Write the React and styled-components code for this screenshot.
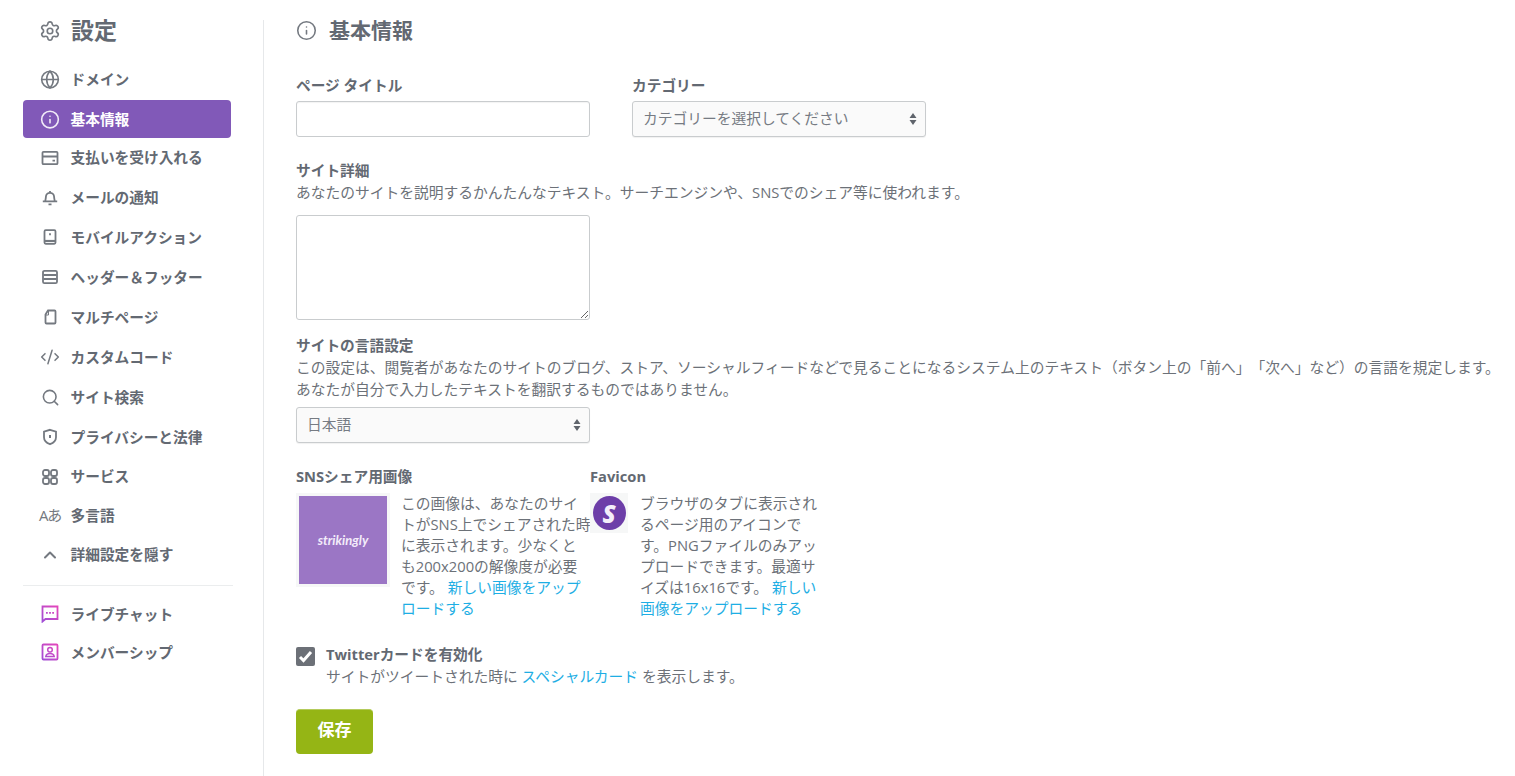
import React from "react"
import styled, { createGlobalStyle } from "styled-components"
import { Settings, Globe, Info, Search, ChevronUp, CodeXml } from "lucide-react"

const GlobalStyle = createGlobalStyle`
  html, body {
    margin: 0;
    padding: 0;
    background: #fff;
    overflow: hidden;
  }
  body {
    font-family: "Open Sans", "Noto Sans CJK JP", sans-serif;
    font-size: 14.75px;
    color: #636972;
    text-spacing-trim: space-all;
  }
  * { box-sizing: border-box; }
`

const Page = styled.div`
  display: flex;
  height: 776px;
  width: 1515px;
  padding-top: 20px;
`

const Sidebar = styled.aside`
  width: 264px;
  flex: none;
  padding: 0 32px 0 23px;
  border-right: 1px solid #e6e8ea;
`

const SideTitle = styled.h1`
  display: flex;
  align-items: center;
  gap: 10px;
  height: 21px;
  margin: 0 0 18px;
  padding-left: 16px;
  font-size: 23px;
  font-weight: 700;
  line-height: 21px;
  color: #636972;
`

const NavList = styled.nav`
  display: flex;
  flex-direction: column;
`

const NavItem = styled.a`
  display: flex;
  align-items: center;
  height: ${p => p.$h || 40}px;
  padding-left: 17px;
  border-radius: 4px;
  font-size: 14.7px;
  font-weight: 700;
  white-space: nowrap;
  background: ${p => (p.$active ? "#8159b8" : "transparent")};
  color: ${p => (p.$active ? "#fff" : "#636972")};
`

const NavLabel = styled.span`
  margin-top: -2px;
`

const NavIcon = styled.span`
  display: flex;
  align-items: center;
  justify-content: center;
  width: 20px;
  height: 20px;
  margin-right: 10.5px;
  flex: none;
  color: ${p => (p.$active ? "#f1ebf8" : "#747980")};
`

const LangGlyph = styled.span`
  font-size: 15px;
  font-weight: 400;
  letter-spacing: -1.2px;
  white-space: nowrap;
  margin-top: -2px;
`

const Divider = styled.hr`
  margin: 11px -2px 9px 0;
  border: 0;
  border-top: 1px solid #ebedee;
`

const Main = styled.main`
  flex: 1;
  padding-left: 32px;
  min-width: 0;
`

const PageTitle = styled.h2`
  display: flex;
  align-items: center;
  gap: 12px;
  height: 21px;
  margin: 0 0 34px;
  font-size: 21px;
  font-weight: 700;
  line-height: 19px;
`

const TwoCols = styled.div`
  display: flex;
  gap: 42px;
`

const Field = styled.div`
  width: 294px;
`

const Label = styled.label`
  display: block;
  height: 21px;
  margin-bottom: ${p => p.$gap ?? 0}px;
  font-size: 14.7px;
  font-weight: 700;
  line-height: 21px;
  white-space: nowrap;
`

const Help = styled.p`
  margin: 0;
  font-size: 14.75px;
  line-height: 22px;
  white-space: nowrap;
  color: #6c7178;
`

const TextInput = styled.input`
  display: block;
  width: 294px;
  height: 36px;
  padding: 0 10px;
  background: #fff;
  border: 1px solid #c9ccce;
  border-radius: 3px;
  box-shadow: inset 0 1px 1px rgba(0, 0, 0, 0.05);
`

const SelectBox = styled.div`
  display: flex;
  align-items: center;
  justify-content: space-between;
  width: 294px;
  height: 36px;
  margin-top: ${p => p.$top || 0}px;
  padding: 0 8px 3px 10px;
  background: #fafafa;
  border: 1px solid #c9ccce;
  border-radius: 3px;
  box-shadow: 0 1px 1px rgba(0, 0, 0, 0.06);
  font-size: 14.75px;
  color: #767b83;
`

const Arrows = styled.svg`
  flex: none;
  margin-top: 3px;
`

const TextArea = styled.textarea`
  display: block;
  width: 294px;
  height: 105px;
  margin-top: 12px;
  background: #fff;
  border: 1px solid #c9ccce;
  border-radius: 3px;
`

const Section = styled.section`
  margin-top: ${p => p.$top}px;
`

const MediaRow = styled.div`
  display: flex;
  margin-top: 23px;
`

const MediaCol = styled.div`
  width: ${p => p.$w}px;
  flex: none;
`

const MediaBody = styled.div`
  display: flex;
  margin-top: 6px;
`

const SnsFrame = styled.div`
  display: flex;
  width: 94px;
  height: 94px;
  padding: 3px;
  margin-right: 11px;
  flex: none;
  background: #f6f7f7;
`

const SnsImage = styled.div`
  flex: 1;
  display: flex;
  align-items: center;
  justify-content: center;
  background: #9b76c5;
  color: #f3ecfa;
  font-family: "Lato", sans-serif;
  font-size: 13px;
  font-weight: 700;
  font-style: italic;
`

const FavFrame = styled.div`
  display: flex;
  align-items: center;
  justify-content: center;
  width: 38px;
  height: 40px;
  margin-right: 12px;
  flex: none;
  background: #f6f7f7;
`

const FavCircle = styled.div`
  display: flex;
  align-items: center;
  justify-content: center;
  width: 33px;
  height: 34px;
  border-radius: 50%;
  background: #6d3ea8;
  color: #f4eefa;
  font-family: "Open Sans", sans-serif;
  font-size: 24px;
  font-weight: 800;
  font-style: italic;
`

const MediaText = styled.p`
  margin: 0;
  font-size: 14.75px;
  line-height: 21px;
  width: ${p => p.$w}px;
  flex: none;
  color: #6c7178;
`

const Link = styled.a`
  color: #1eaee4;
`

const CheckRow = styled.div`
  display: flex;
  gap: 11px;
  margin-top: 25px;
`

const CheckBox = styled.span`
  display: flex;
  align-items: center;
  justify-content: center;
  width: 19px;
  height: 19px;
  margin-top: 3px;
  flex: none;
  background: #6c7077;
  border-radius: 2px;
`

const SaveButton = styled.button`
  display: block;
  width: 77px;
  height: 45px;
  margin-top: 22px;
  padding: 0 0 7px;
  background: #95b515;
  border: 0;
  border-top: 1px solid #b4cb5c;
  border-radius: 4px;
  color: #fff;
  font-family: inherit;
  font-size: 17px;
  font-weight: 700;
`

const stroke = { fill: "none", stroke: "currentColor", strokeWidth: 1.8 }

const CardIcon = () => (
  <svg width="18" height="18" viewBox="0 0 18 18" {...stroke}>
    <rect x="1.500" y="2.800" width="15" height="12.400" rx="1" />
    <path d="M2 7.500h14M11.500 11.700h2.500" />
  </svg>
)
const BellIcon = () => (
  <svg width="18" height="18" viewBox="0 0 18 18" {...stroke}>
    <path d="M1.800 13.300h14.400M4.300 13c0-1 .5-2 .6-4.200C5 6.500 6.800 4.800 9 4.800s4 1.700 4.100 4c.1 2.200.6 3.200.6 4.200M9 3v2M7.500 16.300h3" />
  </svg>
)
const MobileIcon = () => (
  <svg width="18" height="18" viewBox="0 0 18 18" {...stroke}>
    <rect x="3.500" y="2.200" width="11" height="13.600" rx="1.200" />
    <path d="M4 13h10" strokeWidth="2.200" />
    <path d="M9 5.200v2" />
  </svg>
)
const PanelIcon = () => (
  <svg width="18" height="18" viewBox="0 0 18 18" {...stroke}>
    <rect x="2" y="2.800" width="14" height="12.400" rx="1.500" />
    <path d="M2.500 7h13M2.500 11h13" strokeWidth="2" />
  </svg>
)
const PageIcon = () => (
  <svg width="18" height="18" viewBox="0 0 18 18" {...stroke}>
    <path d="M7 2.500h6.500a1 1 0 0 1 1 1v11a1 1 0 0 1-1 1h-8a1 1 0 0 1-1-1V6.500z" />
    <path d="M7.500 3v4H4.500" strokeWidth="1" />
  </svg>
)
const ShieldIcon = () => (
  <svg width="18" height="18" viewBox="0 0 18 18" {...stroke}>
    <path d="M9 1.800l6 1.900v5.500c0 3.300-2.700 5.700-6 7-3.300-1.300-6-3.700-6-7V3.700z" />
    <path d="M9 7v3" strokeWidth="2" />
  </svg>
)
const GridIcon = () => (
  <svg width="18" height="18" viewBox="0 0 18 18" {...stroke}>
    <rect x="2" y="2" width="6" height="6" rx="2" />
    <rect x="10" y="2" width="6" height="6" rx="2" />
    <rect x="2" y="10" width="6" height="6" rx="2" />
    <rect x="10" y="10" width="6" height="6" rx="2" />
  </svg>
)
const ChatIcon = () => (
  <svg width="18" height="18" viewBox="0 0 18 18" fill="none">
    <defs>
      <linearGradient id="pinkA" gradientUnits="userSpaceOnUse" x1="0" y1="18" x2="18" y2="0">
        <stop offset="0" stopColor="#9a4fd8" />
        <stop offset="1" stopColor="#ea45b8" />
      </linearGradient>
    </defs>
    <path d="M1.500 1.500h15v12.500H4.500l-3 2.500z" stroke="url(#pinkA)" strokeWidth="1.800" />
    <path d="M5 7.800h1.800M8.100 7.800h1.800M11.200 7.800h1.800" stroke="url(#pinkA)" strokeWidth="1.800" />
  </svg>
)
const MemberIcon = () => (
  <svg width="18" height="18" viewBox="0 0 18 18" fill="none">
    <defs>
      <linearGradient id="pinkB" gradientUnits="userSpaceOnUse" x1="0" y1="18" x2="18" y2="0">
        <stop offset="0" stopColor="#9a4fd8" />
        <stop offset="1" stopColor="#ea45b8" />
      </linearGradient>
    </defs>
    <rect x="1.500" y="1.500" width="15" height="15" rx="1" stroke="url(#pinkB)" strokeWidth="1.800" />
    <circle cx="9" cy="6.800" r="2.300" stroke="url(#pinkB)" strokeWidth="1.500" />
    <path d="M4.800 13.500c.3-2 2-3 4.200-3s3.900 1 4.200 3z" stroke="url(#pinkB)" strokeWidth="1.500" />
  </svg>
)

const UpDown = () => (
  <Arrows width="8" height="14" viewBox="0 0 8 14" fill="#5f646c">
    <path d="M4 1l3.500 5H.5zM4 13L.5 8h7z" />
  </Arrows>
)

const navItems = [
  { label: "ドメイン", icon: <Globe size={21} strokeWidth={1.9} />, h: 41 },
  { label: "基本情報", icon: <Info size={21} strokeWidth={1.9} />, active: true, h: 38 },
  { label: "支払いを受け入れる", icon: <CardIcon />, h: 39 },
  { label: "メールの通知", icon: <BellIcon /> },
  { label: "モバイルアクション", icon: <MobileIcon /> },
  { label: "ヘッダー＆フッター", icon: <PanelIcon /> },
  { label: "マルチページ", icon: <PageIcon /> },
  { label: "カスタムコード", icon: <CodeXml size={22} strokeWidth={1.8} /> },
  { label: "サイト検索", icon: <Search size={19} strokeWidth={2} /> },
  { label: "プライバシーと法律", icon: <ShieldIcon /> },
  { label: "サービス", icon: <GridIcon />, h: 39 },
  { label: "多言語", icon: <LangGlyph>Aあ</LangGlyph>, h: 39 },
  { label: "詳細設定を隠す", icon: <ChevronUp size={24} strokeWidth={2.4} />, h: 39 },
]

export default function App() {
  return (
    <Page>
      <GlobalStyle />
      <Sidebar>
        <SideTitle>
          <Settings size={22} strokeWidth={1.8} color="#747980" />
          設定
        </SideTitle>
        <NavList>
          {navItems.map(item => (
            <NavItem key={item.label} $active={item.active} $h={item.h}>
              <NavIcon $active={item.active}>{item.icon}</NavIcon>
              <NavLabel>{item.label}</NavLabel>
            </NavItem>
          ))}
          <Divider />
          <NavItem $h={38}>
            <NavIcon><ChatIcon /></NavIcon>
            <NavLabel>ライブチャット</NavLabel>
          </NavItem>
          <NavItem $h={38}>
            <NavIcon><MemberIcon /></NavIcon>
            <NavLabel>メンバーシップ</NavLabel>
          </NavItem>
        </NavList>
      </Sidebar>

      <Main>
        <PageTitle>
          <Info size={21} strokeWidth={1.8} color="#747980" />
          基本情報
        </PageTitle>

        <TwoCols>
          <Field>
            <Label $gap={5}>ページ タイトル</Label>
            <TextInput type="text" />
          </Field>
          <Field>
            <Label $gap={5}>カテゴリー</Label>
            <SelectBox>
              カテゴリーを選択してください
              <UpDown />
            </SelectBox>
          </Field>
        </TwoCols>

        <Section $top={23}>
          <Label>サイト詳細</Label>
          <Help>あなたのサイトを説明するかんたんなテキスト。サーチエンジンや、SNSでのシェア等に使われます。</Help>
          <TextArea />
        </Section>

        <Section $top={15}>
          <Label>サイトの言語設定</Label>
          <Help>
            この設定は、閲覧者があなたのサイトのブログ、ストア、ソーシャルフィードなどで見ることになるシステム上のテキスト（ボタン上の「前へ」「次へ」など）の言語を規定します。
            <br />
            あなたが自分で入力したテキストを翻訳するものではありません。
          </Help>
          <SelectBox $top={7}>
            日本語
            <UpDown />
          </SelectBox>
        </Section>

        <MediaRow>
          <MediaCol $w={294}>
            <Label>SNSシェア用画像</Label>
            <MediaBody>
              <SnsFrame>
                <SnsImage>strikingly</SnsImage>
              </SnsFrame>
              <MediaText $w={191}>
                この画像は、あなたのサイトがSNS上でシェアされた時に表示されます。少なくと
                <br />
                も200x200の解像度が必要です。{" "}
                <Link>新しい画像をアップロードする</Link>
              </MediaText>
            </MediaBody>
          </MediaCol>
          <MediaCol $w={232}>
            <Label>Favicon</Label>
            <MediaBody>
              <FavFrame>
                <FavCircle>S</FavCircle>
              </FavFrame>
              <MediaText $w={180}>
                ブラウザのタブに表示されるページ用のアイコンです。PNGファイルのみアップロードできます。最適サイズは16x16です。{" "}
                <Link>新しい画像をアップロードする</Link>
              </MediaText>
            </MediaBody>
          </MediaCol>
        </MediaRow>

        <CheckRow>
          <CheckBox>
            <svg width="15" height="13" viewBox="0 0 15 13" fill="none" stroke="#fff" strokeWidth="3">
              <path d="M2 7l3.500 3.500L13 2" />
            </svg>
          </CheckBox>
          <div>
            <Label>Twitterカードを有効化</Label>
            <Help>
              サイトがツイートされた時に <Link>スペシャルカード</Link> を表示します。
            </Help>
          </div>
        </CheckRow>

        <SaveButton>保存</SaveButton>
      </Main>
    </Page>
  )
}
